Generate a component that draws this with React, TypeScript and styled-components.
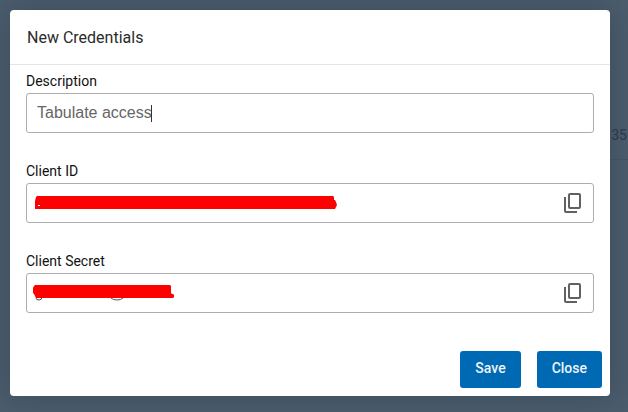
import React, { useState } from "react";
import styled, { createGlobalStyle } from "styled-components";

const GlobalStyle = createGlobalStyle`
  *, *::before, *::after { box-sizing: border-box; }
  body {
    margin: 0;
    background: #4c5e6e;
    font-family: Roboto, "Liberation Sans", sans-serif;
  }
`;

const Backdrop = styled.main`
  position: relative;
  display: flex;
  min-height: 100vh;
  padding: 10px 18px 16px 10px;
  overflow: hidden;
`;

const PageRow = styled.div`
  position: absolute;
  top: 55px;
  right: 0;
  width: 50%;
  height: 105px;
  padding: 71px 1px 0;
  border-bottom: 1px solid #465665;
  color: #2b3a4a;
  font-size: 14px;
  line-height: 18px;
  text-align: right;
`;

const Dialog = styled.form`
  position: relative;
  flex: 1;
  display: flex;
  flex-direction: column;
  align-self: flex-start;
  background: #fff;
  border-radius: 4px;
  box-shadow: 0 0 32px 4px rgba(38, 48, 64, 0.36);
`;

const Header = styled.header`
  padding: 16px 17px 15px;
  border-bottom: 1px solid #e4e4e4;
`;

const Title = styled.h1`
  margin: 0;
  color: #2b2b2b;
  font-size: 16px;
  font-weight: 400;
  line-height: 23px;
`;

const Fields = styled.div`
  display: flex;
  flex-direction: column;
  gap: 30px;
  padding: 8px 16px 38px;
`;

const Field = styled.div`
  display: flex;
  flex-direction: column;
  gap: 4px;
`;

const Label = styled.label`
  color: #111;
  font-size: 14px;
  line-height: 16px;
`;

const InputBox = styled.div`
  position: relative;
  display: flex;
  align-items: center;
  height: 40px;
  padding: 0 12px 0 10px;
  border: 1px solid #adadad;
  border-radius: 3px;
`;

const TextInput = styled.input<{ $fitText?: boolean }>`
  flex: ${(p) => (p.$fitText ? "0 1 auto" : "1")};
  field-sizing: ${(p) => (p.$fitText ? "content" : "fixed")};
  min-width: 0;
  padding: 0;
  border: 0;
  outline: 0;
  background: transparent;
  color: #666;
  caret-color: transparent;
  font-family: "Liberation Sans", Arial, sans-serif;
  font-size: 16px;
  line-height: 20px;
`;

const Caret = styled.span`
  width: 1px;
  height: 17px;
  margin-left: -1px;
  background: #333;
`;

const CopyButton = styled.button`
  display: flex;
  padding: 0;
  border: 0;
  background: none;
  color: #616161;
  cursor: pointer;
`;

const Redaction = styled.svg`
  position: absolute;
  top: 9px;
  left: 4px;
  pointer-events: none;
`;

const Actions = styled.footer`
  display: flex;
  justify-content: flex-end;
  gap: 16px;
  padding: 0 8px 8px;
`;

const ActionButton = styled.button`
  height: 37px;
  padding: 0 15px 3px;
  border: 0;
  border-radius: 3px;
  background: #0069b4;
  color: #edf4fa;
  font-family: inherit;
  font-size: 14px;
  font-weight: 500;
  line-height: 20px;
  cursor: pointer;
`;

function CopyIcon() {
  return (
    <svg width="17" height="20" viewBox="0 0 17 20" fill="none" stroke="currentColor" strokeWidth="2" aria-hidden="true">
      <rect x="5" y="1" width="11" height="14" rx="1" />
      <path d="M1 4v14q0 1 1 1h11" />
    </svg>
  );
}

function IdMask() {
  return (
    <Redaction width="310" height="22" aria-hidden="true">
      <path fill="#f00" d="M6 3h296l1 1v3h1l1 2 1 3-1 2-1 2H4V8l1-4z" />
      <path fill="#fff" d="M7 12h2v1H7z" />
    </Redaction>
  );
}

function SecretMask() {
  return (
    <Redaction width="150" height="22" aria-hidden="true">
      <path fill="none" stroke="#555" d="M5 15q0 2 3 2t3-3M80 15q2 2 6 2t6-2" />
      <path fill="#f00" d="M4 2h135l1 1v7l1 1h1l1 1v2l-1 1H5l-1-2-1-2-1-1V5l1-2z" />
    </Redaction>
  );
}

function SecretField({ id, label, children }: { id: string; label: string; children: React.ReactNode }) {
  return (
    <Field>
      <Label htmlFor={id}>{label}</Label>
      <InputBox>
        <TextInput id={id} readOnly value="" />
        {children}
        <CopyButton type="button" aria-label={`Copy ${label}`}>
          <CopyIcon />
        </CopyButton>
      </InputBox>
    </Field>
  );
}

export default function App() {
  const [description, setDescription] = useState("Tabulate access");
  return (
    <Backdrop>
      <GlobalStyle />
      <PageRow>35</PageRow>
      <Dialog role="dialog" aria-labelledby="title" onSubmit={(e) => e.preventDefault()}>
        <Header>
          <Title id="title">New Credentials</Title>
        </Header>
        <Fields>
          <Field>
            <Label htmlFor="description">Description</Label>
            <InputBox>
              <TextInput
                id="description"
                $fitText
                autoFocus
                value={description}
                onChange={(e) => setDescription(e.target.value)}
              />
              <Caret />
            </InputBox>
          </Field>
          <SecretField id="client-id" label="Client ID">
            <IdMask />
          </SecretField>
          <SecretField id="client-secret" label="Client Secret">
            <SecretMask />
          </SecretField>
        </Fields>
        <Actions>
          <ActionButton type="submit">Save</ActionButton>
          <ActionButton type="button">Close</ActionButton>
        </Actions>
      </Dialog>
    </Backdrop>
  );
}
